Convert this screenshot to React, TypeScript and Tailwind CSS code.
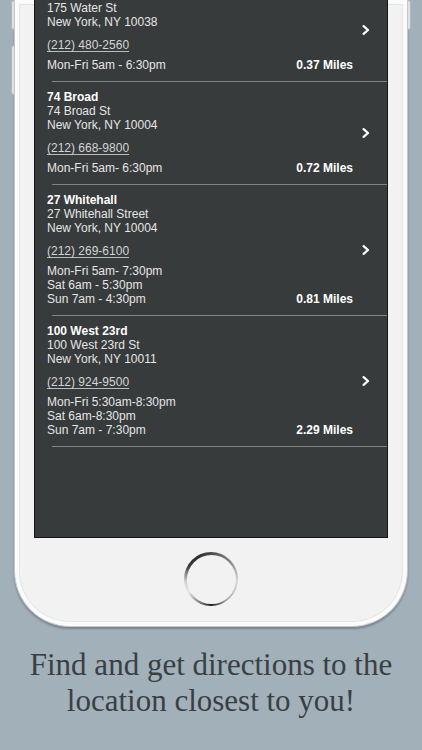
type Spot = {
  title: string;
  addr: string[];
  phone: string;
  hours: string[];
  miles: string;
};

const spots: Spot[] = [
  {
    title: "175 Water",
    addr: ["175 Water St", "New York, NY 10038"],
    phone: "(212) 480-2560",
    hours: ["Mon-Fri 5am - 6:30pm"],
    miles: "0.37 Miles",
  },
  {
    title: "74 Broad",
    addr: ["74 Broad St", "New York, NY 10004"],
    phone: "(212) 668-9800",
    hours: ["Mon-Fri 5am- 6:30pm"],
    miles: "0.72 Miles",
  },
  {
    title: "27 Whitehall",
    addr: ["27 Whitehall Street", "New York, NY 10004"],
    phone: "(212) 269-6100",
    hours: ["Mon-Fri 5am- 7:30pm", "Sat 6am - 5:30pm", "Sun 7am - 4:30pm"],
    miles: "0.81 Miles",
  },
  {
    title: "100 West 23rd",
    addr: ["100 West 23rd St", "New York, NY 10011"],
    phone: "(212) 924-9500",
    hours: ["Mon-Fri 5:30am-8:30pm", "Sat 6am-8:30pm", "Sun 7am - 7:30pm"],
    miles: "2.29 Miles",
  },
];

function Chevron() {
  return (
    <svg width="8" height="10" viewBox="0 0 8 10" fill="none">
      <polyline
        points="1.6,1.2 6,5 1.6,8.8"
        stroke="#ffffff"
        strokeWidth="2.3"
        strokeLinecap="round"
        strokeLinejoin="round"
      />
    </svg>
  );
}

function SpotRow({ spot }: { spot: Spot }) {
  return (
    <>
      <div className="flex pl-3 pr-[17px] pt-2 pb-[9px]">
        <div className="flex-1">
          <div className="font-bold text-white">{spot.title}</div>
          {spot.addr.map((a) => (
            <div key={a}>{a}</div>
          ))}
          <div className="mt-[9px] text-[#d2d4d5] underline underline-offset-2 decoration-[#b8bbbc]">
            {spot.phone}
          </div>
          <div className="mt-[6px]">
            {spot.hours.map((h) => (
              <div key={h}>{h}</div>
            ))}
          </div>
        </div>
        <div className="self-end font-bold text-white">{spot.miles}</div>
        <div className="self-center ml-[9px] flex">
          <Chevron />
        </div>
      </div>
      <div className="ml-[17px] h-px bg-[#808485]" />
    </>
  );
}

export default function App() {
  return (
    <div className="h-[750px] w-full overflow-hidden bg-[#a2b0b9]">
      <div className="relative mx-auto w-[394px]">
        {/* side buttons */}
        <div className="absolute -left-[3px] top-0 h-[30px] w-[3px] rounded-l-sm border border-r-0 border-[#b4b9bc] bg-[#dde1e3]" />
        <div className="absolute -left-[3px] top-[45px] h-[50px] w-[3px] rounded-l-sm border border-r-0 border-[#b4b9bc] bg-[#dde1e3]" />
        <div className="absolute -right-[3px] top-0 h-[30px] w-[3px] rounded-r-sm border border-l-0 border-[#b4b9bc] bg-[#dde1e3]" />

        <div className="h-[627px] rounded-b-[56px] border-x border-b border-[#c3c8cb] bg-[#f2f2f2] px-[19px] shadow-[inset_0_0_0_4px_#fbfbfb,inset_0_0_0_5px_#e3e4e5,0_2px_2px_rgba(40,50,60,0.35)]">
          <div className="h-[538px] overflow-hidden border-x border-b border-[#141516] bg-[#383b3c] font-['Liberation_Sans',Arial,sans-serif] text-[12px] leading-[14px] text-[#e4e5e5]">
            <div className="-mt-[21px]">
              {spots.map((s) => (
                <SpotRow key={s.title} spot={s} />
              ))}
            </div>
          </div>
          <div className="flex justify-center pt-[14px]">
            <div className="h-[54px] w-[54px] rounded-full bg-[conic-gradient(#4a4a4a_0deg,#8a8a8a_50deg,#d6d6d6_95deg,#b0b0b0_140deg,#1e1e1e_180deg,#8c8c8c_210deg,#e8e8e8_240deg,#d0d0d0_265deg,#3a3a3a_300deg,#2e2e2e_330deg,#4a4a4a_360deg)] p-[2.5px]">
              <div className="h-full w-full rounded-full bg-[#f2f2f2]" />
            </div>
          </div>
        </div>
      </div>

      <p className="mt-[20px] text-center font-['Liberation_Serif','Times_New_Roman',serif] text-[31px] leading-[36px] text-[#394044]">
        Find and get directions to the
        <br />
        location closest to you!
      </p>
    </div>
  );
}
